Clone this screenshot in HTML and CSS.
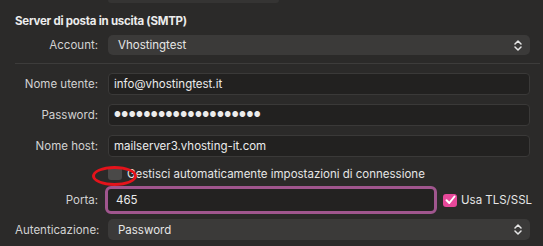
FILE: index.html
```html
<!DOCTYPE html>
<html lang="it">
<head>
    <meta charset="UTF-8">
    <title>Server di posta in uscita</title>
    <link rel="stylesheet" href="styles.css">
</head>
<body>
    <div class="panel">
        <div class="prevField"></div>
        <h3 class="title">Server di posta in uscita (SMTP)</h3>

        <div class="row popupRow">
            <label>Account:</label>
            <div class="popup">
                <span>Vhostingtest</span>
                <svg class="chev" width="8" height="11" viewBox="0 0 8 11"><path d="M1 4 L4 1 L7 4 M1 7 L4 10 L7 7" fill="none" stroke="#e6e6e6" stroke-width="1.5" stroke-linecap="round" stroke-linejoin="round"/></svg>
            </div>
        </div>

        <div class="separator"></div>

        <div class="row fieldRow">
            <label>Nome utente:</label>
            <div class="field">info@vhostingtest.it</div>
        </div>
        <div class="row fieldRow">
            <label>Password:</label>
            <div class="field dots">&#9679;&#9679;&#9679;&#9679;&#9679;&#9679;&#9679;&#9679;&#9679;&#9679;&#9679;&#9679;&#9679;&#9679;&#9679;&#9679;&#9679;&#9679;&#9679;&#9679;</div>
        </div>
        <div class="row fieldRow">
            <label>Nome host:</label>
            <div class="field">mailserver3.vhosting-it.com</div>
        </div>

        <div class="row checkRow">
            <span></span>
            <div class="checkWrap">
                <span class="check"></span>
                <span class="marker"></span>
                <span>Gestisci automaticamente impostazioni di connessione</span>
            </div>
        </div>

        <div class="row portRow">
            <label>Porta:</label>
            <div class="portLine">
                <div class="field focused">465</div>
                <span class="check on">
                    <svg width="11" height="10" viewBox="0 0 11 10"><path d="M1.5 5.2 L4.3 8 L9.5 1.5" fill="none" stroke="#fff" stroke-width="2" stroke-linecap="round" stroke-linejoin="round"/></svg>
                </span>
                <span class="tls">Usa TLS/SSL</span>
            </div>
        </div>

        <div class="row popupRow last">
            <label>Autenticazione:</label>
            <div class="popup">
                <span>Password</span>
                <svg class="chev" width="8" height="11" viewBox="0 0 8 11"><path d="M1 4 L4 1 L7 4 M1 7 L4 10 L7 7" fill="none" stroke="#e6e6e6" stroke-width="1.5" stroke-linecap="round" stroke-linejoin="round"/></svg>
            </div>
        </div>
    </div>
</body>
</html>
```

FILE: styles.css
```css
* {
    margin: 0;
    padding: 0;
    box-sizing: border-box;
}
body {
    background: #2b2a29;
    color: #e4e4e4;
    font-family: "Inter", "Liberation Sans", sans-serif;
    font-size: 11.5px;
    width: 543px;
    height: 246px;
    overflow: hidden;
}
.panel {
    padding: 0 13px 0 15px;
    position: relative;
}
.prevField {
    margin-left: 93px;
    width: 171px;
    height: 3px;
    background: #353433;
    border-radius: 0 0 4px 4px;
}
.title {
    font-size: 11.5px;
    font-weight: 700;
    letter-spacing: -0.25px;
    color: #ececec;
    margin-top: 11px;
    height: 15px;
    line-height: 15px;
}
.row {
    display: grid;
    grid-template-columns: 83px 1fr;
    column-gap: 10px;
    align-items: center;
}
.row label {
    text-align: right;
    color: #d2d2d2;
    white-space: nowrap;
}
.popupRow {
    margin-top: 6px;
}
.popup {
    height: 20px;
    background: #3b3a39;
    border-radius: 5px;
    display: flex;
    align-items: center;
    justify-content: space-between;
    padding: 0 8px 0 10px;
    color: #e6e6e6;
}
.separator {
    height: 1px;
    background: #3d3c3b;
    margin: 8px -10px 0 0;
}
.fieldRow {
    margin-top: 9px;
}
.field {
    height: 22px;
    background: #222120;
    border: 1px solid #3a3938;
    border-radius: 4px;
    padding: 0 5px;
    line-height: 20px;
    color: #ececec;
}
.dots {
    font-size: 7.5px;
    letter-spacing: 0.5px;
}
.checkRow {
    margin-top: 10px;
}
.checkWrap {
    display: flex;
    align-items: center;
    gap: 5px;
    position: relative;
    color: #e6e6e6;
    height: 13px;
}
.check {
    width: 14px;
    height: 13px;
    border-radius: 3px;
    background: #4a4948;
    display: inline-flex;
    align-items: center;
    justify-content: center;
    flex: none;
}
.check.on {
    background: #e7489a;
}
.marker {
    position: absolute;
    left: -16px;
    top: -1px;
    width: 45px;
    height: 20px;
    border: 3px solid #e5131b;
    border-radius: 50%;
}
.portRow {
    margin-top: 6px;
}
.portLine {
    display: flex;
    align-items: center;
    gap: 6px;
    margin-left: -3px;
    white-space: nowrap;
}
.focused {
    width: 332px;
    height: 28px;
    border: 3px solid #a0568e;
    border-radius: 6px;
    line-height: 22px;
    padding-left: 8px;
    background: #232221;
    flex: none;
}
.tls {
    margin-left: -2px;
    color: #e6e6e6;
}
.last {
    margin-top: 5px;
}
.last .popup {
    height: 21px;
}
```
